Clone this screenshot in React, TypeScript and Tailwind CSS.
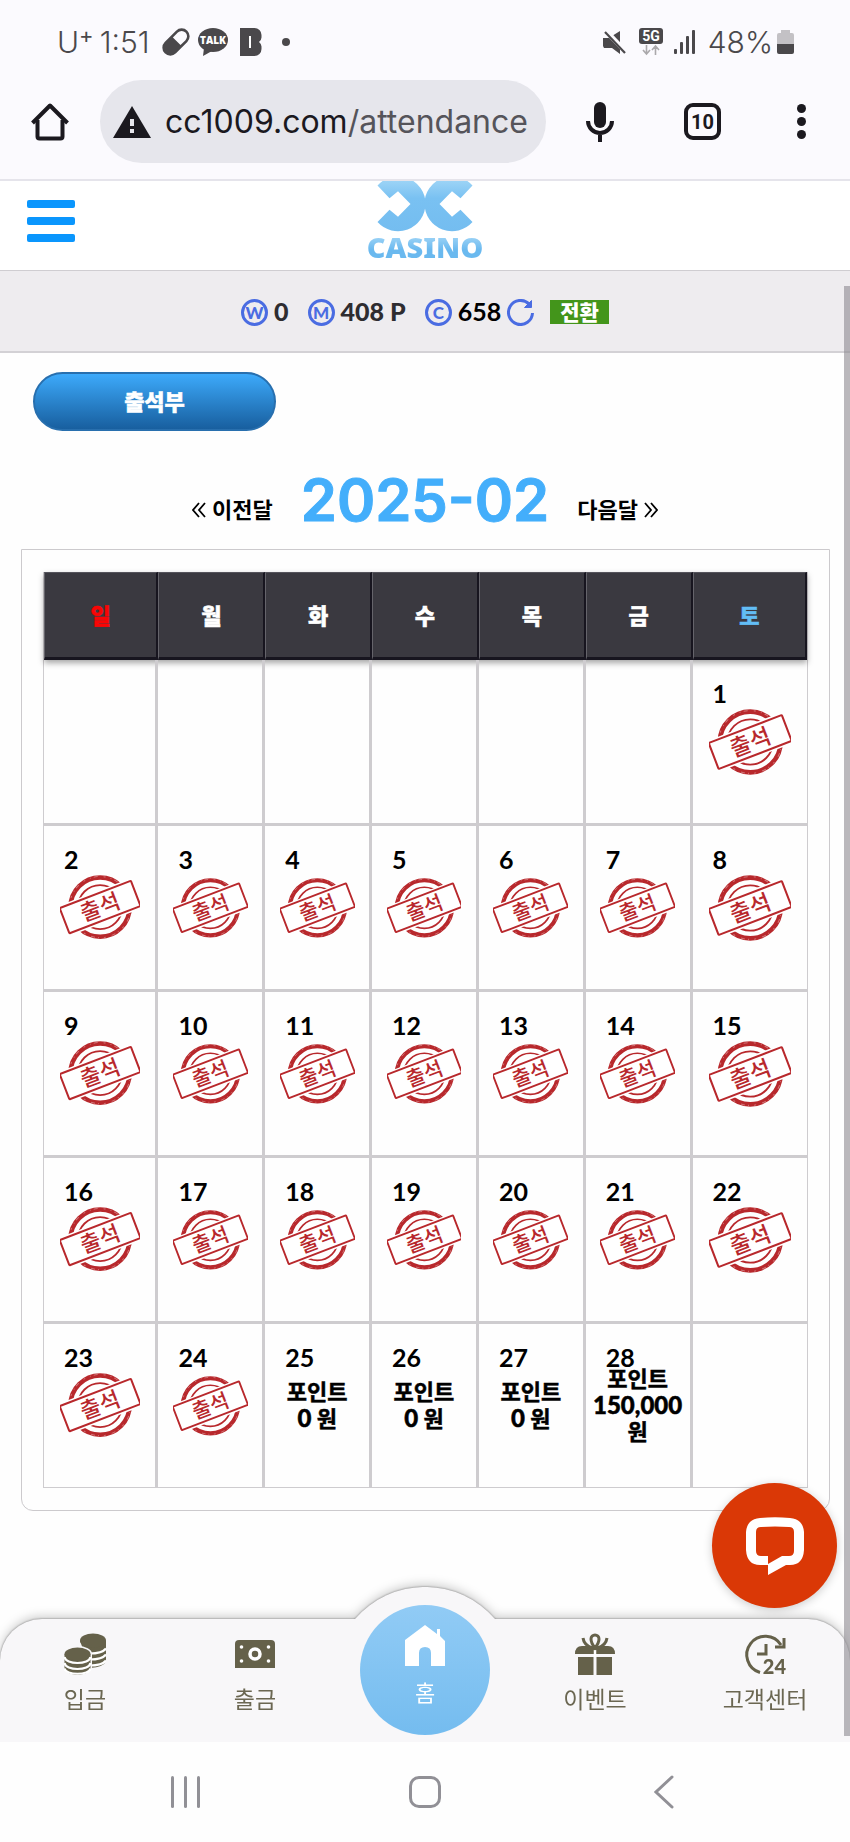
import type { ReactNode } from 'react';
import clsx from 'clsx';

type Day = { day: number; stamped?: boolean; points?: string };

const WEEKDAYS = ['일', '월', '화', '수', '목', '금', '토'];

const POINTS: Record<number, string> = { 25: '0', 26: '0', 27: '0', 28: '150,000' };

const DAYS: (Day | null)[] = [
  ...Array(6).fill(null),
  ...Array.from({ length: 28 }, (_, i) => ({ day: i + 1, stamped: i < 24, points: POINTS[i + 1] })),
  null,
];

const WEEKS = [0, 1, 2, 3, 4].map((week) => DAYS.slice(week * 7, week * 7 + 7));

function StatusBar() {
  return (
    <div className="flex h-20 items-center justify-between pt-1 pr-14 pl-[57px] font-['Inter',sans-serif] text-[30px] font-light text-[#4a484b]">
      <div className="flex items-center">
        <span>
          U<sup className="-top-2.5 text-[22px] font-normal">+</sup>
        </span>
        <span className="ml-1.5">1:51</span>
        <svg className="ml-3 size-7" viewBox="0 0 28 28" aria-hidden="true">
          <g transform="rotate(-45 14 14)">
            <rect x="-2" y="6" width="32" height="16" rx="8" fill="#4a484b" />
            <path d="M15 8.600h7a5.400 5.400 0 0 1 0 10.800h-7z" fill="#fbfafe" />
          </g>
        </svg>
        <svg className="ml-2 h-7 w-[30px]" viewBox="0 0 30 28" aria-hidden="true">
          <ellipse cx="15" cy="12" rx="15" ry="12" fill="#4a484b" />
          <path d="M6 20 5 28l9-5z" fill="#4a484b" />
          <text x="15" y="16" textAnchor="middle" fontSize="10" fontWeight="800" fontFamily="Open Sans, sans-serif" fill="#fff">
            TALK
          </text>
        </svg>
        <svg className="ml-3 h-7 w-[22px]" viewBox="0 0 22 28" aria-hidden="true">
          <path d="M0 0h14.500a7 7 0 0 1 7 7v2.500a6 6 0 0 1-2.500 4.500 6 6 0 0 1 2.500 4.500V21a7 7 0 0 1-7 7H0z" fill="#4a484b" />
          <path d="M10 8v12" stroke="#fff" strokeWidth="2" />
        </svg>
        <span className="ml-5 size-2 rounded-full bg-[#4a484b]" />
      </div>
      <div className="flex items-center">
        <svg className="size-6" viewBox="0 0 24 24" aria-hidden="true">
          <path d="M0 8h5l4-1 8 8v9l-8-6H1l-1-2zM17 1v12L9 6z" fill="#4a484b" />
          <path d="m3 1 20 21" stroke="#fbfafe" strokeWidth="5" />
          <path d="m2 2 20 21" stroke="#4a484b" strokeWidth="2.200" />
        </svg>
        <svg className="ml-3 h-7 w-6" viewBox="0 0 24 28" aria-hidden="true">
          <rect width="24" height="16" rx="3" fill="#4a484b" />
          <text x="12" y="13" textAnchor="middle" fontSize="14" fontWeight="700" fontFamily="Roboto, sans-serif" fill="#fff">
            5G
          </text>
          <path d="M7.500 17v9m-3.500-4 3.500 4 3.500-4M16.500 27v-9m-3.500 4 3.500-4 3.500 4" fill="none" stroke="#aaa8ab" strokeWidth="1.600" />
        </svg>
        <svg className="ml-2.5 h-6 w-[23px]" viewBox="0 0 23 24" fill="#4a484b" aria-hidden="true">
          <rect x="1" y="19" width="3" height="5" rx="1" />
          <rect x="7" y="12" width="3" height="12" rx="1" />
          <rect x="13" y="6" width="3" height="18" rx="1" />
          <rect x="19" y="0" width="3" height="24" rx="1" />
        </svg>
        <span className="ml-3">48%</span>
        <svg className="ml-1 h-6 w-[17px]" viewBox="0 0 17 24" aria-hidden="true">
          <path d="M4 0h9v3h2q2 0 2 2v10H0V5q0-2 2-2h2z" fill="#c3c1c5" />
          <path d="M0 14h17v8q0 2-2 2H2q-2 0-2-2z" fill="#4a484b" />
        </svg>
      </div>
    </div>
  );
}

function BrowserBar() {
  return (
    <div className="flex items-center border-b-2 border-[#e5e4eb] pr-11 pb-4 pl-[31px] text-[#1b191f]">
      <button type="button" aria-label="Home">
        <svg className="size-[38px]" viewBox="0 0 38 38" fill="none" stroke="currentColor" strokeWidth="4">
          <path d="M6.500 17v16.500q0 2 2 2h21q2 0 2-2V17" />
          <path d="M1.500 20 19 2.500 36.500 20" strokeLinejoin="round" />
        </svg>
      </button>
      <button
        type="button"
        className="ml-[31px] flex h-[83px] min-w-0 flex-1 items-center rounded-full bg-[#e6e6ec] pl-[13px] font-['Inter',sans-serif] text-[32px] whitespace-nowrap"
      >
        <svg className="mr-[14px] h-8 w-[38px] shrink-0" viewBox="0 0 38 32" aria-hidden="true">
          <path d="M19 0 38 32H0z" fill="currentColor" />
          <path d="M19 13v7m0 3v4" stroke="#e6e6ec" strokeWidth="4" />
        </svg>
        cc1009.com<span className="text-[#55545a]">/attendance</span>
      </button>
      <button type="button" aria-label="Voice search" className="ml-10">
        <svg className="h-10 w-7" viewBox="0 0 28 40" fill="none" stroke="currentColor" strokeWidth="4">
          <rect x="8" y="0" width="12" height="26" rx="6" fill="currentColor" stroke="none" />
          <path d="M2 19a12 12 0 0 0 24 0M14 31v9" />
        </svg>
      </button>
      <button
        type="button"
        aria-label="Open tabs"
        className="ml-[70px] flex size-[37px] items-center justify-center rounded-[9px] border-4 border-current font-['Roboto',sans-serif] text-[20px] font-bold"
      >
        10
      </button>
      <button type="button" aria-label="More" className="ml-[76px] flex flex-col gap-1">
        <span className="size-[9px] rounded-full bg-current" />
        <span className="size-[9px] rounded-full bg-current" />
        <span className="size-[9px] rounded-full bg-current" />
      </button>
    </div>
  );
}

function SiteHeader() {
  return (
    <header className="flex h-[90px] items-start justify-between border-b border-[#cfcdd1] bg-white px-[27px]">
      <button type="button" aria-label="메뉴" className="mt-[19px] flex w-12 flex-col gap-[9px]">
        <span className="h-2 rounded-xs bg-[#0a96fd]" />
        <span className="h-2 rounded-xs bg-[#0a96fd]" />
        <span className="h-2 rounded-xs bg-[#0a96fd]" />
      </button>
      <a href="/" className="flex flex-col items-center">
        <svg className="h-[52px] w-28" viewBox="0 0 112 52" aria-hidden="true">
          <defs>
            <linearGradient id="mark" x1="0" y1="0" x2="0" y2="1">
              <stop offset="0" stopColor="#a5d8f7" />
              <stop offset="0.4" stopColor="#79c1f2" />
              <stop offset="1" stopColor="#74bdf0" />
            </linearGradient>
            <path
              id="half"
              d="M8.500 4.500 20.500 17.300 29 10.200 41.500 23 29 35.700 20.500 28.700 8.500 41A27.500 27.500 0 0 0 56.500 23 27.500 27.500 0 0 0 8.500 4.500z"
              fill="url(#mark)"
            />
          </defs>
          <use href="#half" />
          <use href="#half" transform="translate(112 0) scale(-1 1)" />
        </svg>
        <span className="bg-linear-to-b from-[#a9daf8] to-[#6ab9ef] to-60% bg-clip-text font-['Noto_Sans',sans-serif] text-[29px] leading-7 font-black text-transparent">
          CASINO
        </span>
      </a>
      <span className="w-12" />
    </header>
  );
}

function Coin({ letter }: { letter: string }) {
  return (
    <span className="flex size-[27px] items-center justify-center rounded-full border-3 border-[#4a6ce2] text-[17px] leading-none font-black text-[#4a6ce2]">
      {letter}
    </span>
  );
}

function BalanceBar() {
  return (
    <div className="flex h-[82px] items-center justify-center border-b-2 border-[#d3d1d5] bg-[#eeecef] pt-0.5 font-['Lato','Noto_Sans_CJK_KR',sans-serif] text-[25px] font-black text-[#2e2c30]">
      <Coin letter="W" />
      <span className="ml-1.5">0</span>
      <span className="ml-[19px]">
        <Coin letter="M" />
      </span>
      <span className="ml-1.5">408 P</span>
      <span className="ml-[19px]">
        <Coin letter="C" />
      </span>
      <span className="ml-1.5 font-bold text-black">658</span>
      <button type="button" aria-label="새로고침" className="ml-1.5">
        <svg className="size-[27px]" viewBox="0 0 27 27" fill="none" stroke="#4a6ce2" strokeWidth="3">
          <path d="M25.500 14A12 12 0 1 1 22 5" />
          <path d="M24.500 1.500v7h-7z" fill="#4a6ce2" strokeWidth="1" />
        </svg>
      </button>
      <button type="button" className="ml-4 h-6 bg-[#43951b] px-2.5 text-[21px] leading-6 text-white">
        전환
      </button>
    </div>
  );
}

function Stamp() {
  return (
    <svg className="w-[72%]" viewBox="0 0 80 66" role="img" aria-label="출석">
      <g fill="none" stroke="#b8282c">
        <circle cx="40" cy="33" r="29.500" strokeWidth="4.500" />
        <circle cx="40" cy="33" r="30.500" stroke="#fff" strokeOpacity="0.350" strokeWidth="1" strokeDasharray="2 5 1 3 4 6" />
        <circle cx="40" cy="33" r="22" strokeWidth="1.800" />
      </g>
      <g transform="rotate(-21 40 33)">
        <rect x="0" y="17" width="80" height="32" fill="#fff" />
        <rect x="2" y="19.500" width="76" height="27" rx="1" fill="none" stroke="#b8282c" strokeWidth="2" />
        <text x="40" y="41" textAnchor="middle" fontSize="22" fontWeight="500" fontFamily="Noto Sans CJK KR, sans-serif" fill="#b8282c">
          출석
        </text>
      </g>
    </svg>
  );
}

function DayCell({ entry }: { entry: Day | null }) {
  return (
    <td className="border-r-3 border-b-3 border-[#cecccf] p-0 group-last:border-b-0 last:border-r-0">
      {entry && (
        <div className="grid h-[163px]">
          <span className="col-start-1 row-start-1 self-start pt-[19px] pl-5 text-[25px] leading-7 font-bold">{entry.day}</span>
          <div className="col-start-1 row-start-1 flex items-center justify-center self-center">
            {entry.stamped && <Stamp />}
            {entry.points && (
              <p className="text-center text-[22px] leading-[26px] font-bold [-webkit-text-stroke:0.5px]">
                포인트
                <br />
                <span className="text-[24px] font-black">{entry.points}</span> 원
              </p>
            )}
          </div>
        </div>
      )}
    </td>
  );
}

function Calendar() {
  return (
    <div className="mr-5 ml-[21px] rounded-b-xl border border-[#cccacd] px-[21px] py-[22px]">
      <table className="w-full table-fixed border-separate border-spacing-0 border border-t-0 border-[#cecccf]">
        <thead className="shadow-[0_3px_6px_rgba(0,0,0,0.35)]">
          <tr>
            {WEEKDAYS.map((name, i) => (
              <th
                key={name}
                className={clsx(
                  'h-[88px] border-t border-r-2 border-b-3 border-l border-t-[#55545c] border-r-[#17151f] border-b-[#17151f] border-l-[#65646b] bg-[#3a3940] p-0 text-[22px] font-black [-webkit-text-stroke:0.5px] first:w-[15%] last:w-[15%]',
                  i === 0 ? 'text-[#f90505]' : i === 6 ? 'text-[#62bdf5]' : 'text-white',
                )}
              >
                {name}
              </th>
            ))}
          </tr>
        </thead>
        <tbody>
          {WEEKS.map((week, i) => (
            <tr key={i} className="group">
              {week.map((entry, j) => (
                <DayCell key={j} entry={entry} />
              ))}
            </tr>
          ))}
        </tbody>
      </table>
    </div>
  );
}

function Chevrons({ flip }: { flip?: boolean }) {
  return (
    <svg className={clsx('h-4 w-[14px]', flip && 'rotate-180')} viewBox="0 0 14 16" fill="none" stroke="currentColor" strokeWidth="1.800" aria-hidden="true">
      <path d="M7 1 1 8l6 7M13 1 7 8l6 7" />
    </svg>
  );
}

function MonthPicker() {
  const linkClass = 'mt-5 flex items-center gap-1.5 text-[22px] leading-7 font-bold';
  return (
    <div className="flex items-center justify-center gap-7">
      <a href="#prev" className={linkClass}>
        <Chevrons />
        이전달
      </a>
      <h1 className="font-['Inter',sans-serif] text-[58px] leading-[70px] font-semibold text-[#43aefb] [-webkit-text-stroke:1px]">2025-02</h1>
      <a href="#next" className={linkClass}>
        다음달
        <Chevrons flip />
      </a>
    </div>
  );
}

function CoinsIcon() {
  return (
    <svg className="size-[42px]" viewBox="0 0 42 42" aria-hidden="true">
      <g fill="#65614a">
        <path d="M16 8h26v20q-2 6-16 7z" />
        <path d="M26 20.500q12 0 16-5M26 26.500q12 0 16-5M26 32.500q12 0 16-5" fill="none" stroke="#fff" strokeWidth="2.200" />
        <ellipse cx="29" cy="7.500" rx="13" ry="7" />
      </g>
      <path d="M-1 21a14.500 8 0 0 1 29 0v16l-2 5H-1z" fill="#f8f7f9" />
      <path d="M.5 21h26v14c0 9-26 9-26 0z" fill="#65614a" />
      <path d="M.5 24c1 8 25 8 26 0M.5 30c1 8 25 8 26 0M.5 35.500c1 7 25 7 26 0" fill="none" stroke="#fff" strokeWidth="2.200" />
      <ellipse cx="13.500" cy="21" rx="13" ry="6.500" fill="#65614a" />
    </svg>
  );
}

function BillIcon() {
  return (
    <svg className="size-[42px]" viewBox="0 0 42 42" fill="#65614a" aria-hidden="true">
      <path d="M5 7h32q4 0 4 4v24H1V11q0-4 4-4z" />
      <circle cx="21" cy="21" r="5" stroke="#fff" strokeWidth="3.500" />
      <g fill="#fff">
        <circle cx="7.500" cy="14" r="1.800" />
        <circle cx="34.500" cy="14" r="1.800" />
        <circle cx="7.500" cy="28" r="1.800" />
        <circle cx="34.500" cy="28" r="1.800" />
      </g>
    </svg>
  );
}

function GiftIcon() {
  return (
    <svg className="size-[42px]" viewBox="0 0 42 42" fill="#65614a" aria-hidden="true">
      <path d="M1 21q0-8 7-8h26q7 0 7 8zM4 24h15.500v18H4zM22.500 24H38v18H22.500z" />
      <path d="M21 17v7" stroke="#fff" strokeWidth="2.500" />
      <g fill="none" stroke="#65614a" strokeWidth="3">
        <path d="M9 5q1 7 9 10M33 5q-1 7-9 10M21 15q-4-5-4-9a4 4 0 0 1 8 0q0 4-4 9z" />
      </g>
    </svg>
  );
}

function SupportIcon() {
  return (
    <svg className="size-[42px] overflow-visible" viewBox="0 0 42 42" fill="none" stroke="#65614a" strokeWidth="3" aria-hidden="true">
      <path d="M16 39.500A18.500 18.500 0 1 1 37 12" />
      <path d="M40 5v9h-9" />
      <path d="M22 11v10h-9" />
      <text x="42" y="41" textAnchor="end" fontSize="20" fontWeight="900" fontFamily="Lato, sans-serif" fill="#65614a" stroke="none">
        24
      </text>
    </svg>
  );
}

function NavItem({ label, icon }: { label: string; icon: ReactNode }) {
  return (
    <a href="#" className="flex flex-col items-center gap-2 pt-[14px] text-[#6b6752]">
      {icon}
      <span className="text-[23px] leading-8">{label}</span>
    </a>
  );
}

function BottomNav() {
  return (
    <nav className="relative h-[123px] filter-[drop-shadow(0_0_1px_rgba(0,0,0,0.45))_drop-shadow(0_-3px_5px_rgba(0,0,0,0.18))]">
      <svg className="absolute bottom-full left-1/2 h-8 w-[140px] -translate-x-1/2" viewBox="0 0 140 32" aria-hidden="true">
        <path d="M0 32A92.500 92.500 0 0 1 140 32z" fill="#f8f7f9" />
      </svg>
      <div className="relative grid h-full grid-cols-5 rounded-t-[42px] bg-[#f8f7f9]">
        <NavItem label="입금" icon={<CoinsIcon />} />
        <NavItem label="출금" icon={<BillIcon />} />
        <a
          href="/"
          className="-mt-[14px] flex size-[130px] flex-col items-center gap-2.5 justify-self-center rounded-full bg-linear-to-b from-[#91cbf5] to-[#74bcef] pt-5 text-white"
        >
          <svg className="size-[42px]" viewBox="0 0 42 42" fill="currentColor" aria-hidden="true">
            <path d="M21 0 33 9V4h3v7l5 5v25H27V28q0-6-6-6t-6 6v13H1V15z" />
          </svg>
          <span className="text-[22px] leading-8">홈</span>
        </a>
        <NavItem label="이벤트" icon={<GiftIcon />} />
        <NavItem label="고객센터" icon={<SupportIcon />} />
      </div>
    </nav>
  );
}

function SystemNav() {
  return (
    <div className="relative grid h-[100px] grid-cols-3 place-items-center bg-[#fefefe] px-[66px] text-[#919096]">
      <button type="button" aria-label="Recents" className="flex h-8 justify-between gap-2.5">
        <span className="w-[3px] rounded-full bg-current" />
        <span className="w-[3px] rounded-full bg-current" />
        <span className="w-[3px] rounded-full bg-current" />
      </button>
      <button type="button" aria-label="Home screen" className="size-8 rounded-[10px] border-3 border-current" />
      <button type="button" aria-label="Back">
        <svg className="h-[34px] w-5" viewBox="0 0 20 34" fill="none" stroke="currentColor" strokeWidth="3" strokeLinecap="round">
          <path d="M18 2 2 17l16 15" />
        </svg>
      </button>
    </div>
  );
}

export default function App() {
  return (
    <div className="flex min-h-screen flex-col bg-[#fefefe] font-['Lato','Noto_Sans_CJK_KR',sans-serif] text-black">
      <div className="bg-[#fbfafe]">
        <StatusBar />
        <BrowserBar />
      </div>
      <div className="relative flex flex-1 flex-col">
        <SiteHeader />
        <BalanceBar />
        <main className="flex-1 pb-[105px]">
          <button
            type="button"
            className="mt-[19px] ml-[33px] block h-[59px] w-[243px] rounded-full border-2 border-[#286fae] bg-linear-to-b from-[#3daafb] to-[#185f9f] text-[22px] font-black text-white [-webkit-text-stroke:0.5px]"
          >
            출석부
          </button>
          <div className="mt-[34px] mb-[14px]">
            <MonthPicker />
          </div>
          <Calendar />
        </main>
        <BottomNav />
        <button
          type="button"
          aria-label="채팅 상담"
          className="absolute right-[13px] bottom-[134px] flex size-[125px] items-center justify-center rounded-full bg-[#da3806] shadow-[0_2px_10px_rgba(0,0,0,0.2)]"
        >
          <svg className="h-[58px] w-[58px]" viewBox="0 0 58 58" aria-hidden="true">
            <path
              fillRule="evenodd"
              fill="#fff"
              d="M14 1Q29-.5 44 1q13 1 14 14 .5 9 0 18-1 15-14 15h-4L22 58V48h-8Q1 48 0 33q-.5-9 0-18Q1 2 14 1zm1 9q-5 0-5 5v19q0 5 5 5h7v8l14-8h7q5 0 5-5V15q0-5-5-5-14-1-28 0z"
            />
          </svg>
        </button>
        <div className="absolute top-[105px] right-0 bottom-1.5 w-1.5 bg-[#8c8890]/60" />
      </div>
      <SystemNav />
    </div>
  );
}
